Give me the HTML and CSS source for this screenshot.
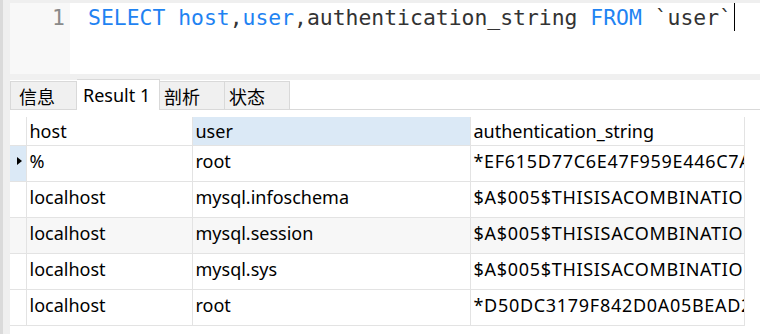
FILE: index.html
```html
<!doctype html>
<html>

<head>
   <meta charset="utf-8">
   <title>query</title>
   <link rel="stylesheet" href="styles.css">
</head>

<body>
   <div class="sideStrip"></div>

   <div class="main">
      <div class="topStrip"></div>

      <div class="editor">
         <div class="gutter">1</div>
         <div class="code"><span class="kw">SELECT</span> <span class="kw">host</span>,<span class="kw">user</span>,authentication_string <span class="kw">FROM</span> `user`<span class="caret"></span></div>
      </div>

      <div class="band"></div>

      <div class="tabs">
         <div class="tab">信息</div>
         <div class="tab active">Result 1</div>
         <div class="tab">剖析</div>
         <div class="tab">状态</div>
      </div>

      <div class="gridWrap">
         <table class="grid">
            <colgroup>
               <col class="cIndicator">
               <col class="cHost">
               <col class="cUser">
               <col class="cAuth">
            </colgroup>
            <thead>
               <tr>
                  <th></th>
                  <th>host</th>
                  <th class="selected">user</th>
                  <th>authentication_string</th>
               </tr>
            </thead>
            <tbody>
               <tr>
                  <td class="indicator current"><span class="arrow"></span></td>
                  <td>%</td>
                  <td>root</td>
                  <td class="hash">*EF615D77C6E47F959E446C7A</td>
               </tr>
               <tr>
                  <td class="indicator"></td>
                  <td>localhost</td>
                  <td>mysql.infoschema</td>
                  <td class="hash">$A$005$THISISACOMBINATION</td>
               </tr>
               <tr class="alt">
                  <td class="indicator"></td>
                  <td>localhost</td>
                  <td>mysql.session</td>
                  <td class="hash">$A$005$THISISACOMBINATION</td>
               </tr>
               <tr>
                  <td class="indicator"></td>
                  <td>localhost</td>
                  <td>mysql.sys</td>
                  <td class="hash">$A$005$THISISACOMBINATION</td>
               </tr>
               <tr>
                  <td class="indicator"></td>
                  <td>localhost</td>
                  <td>root</td>
                  <td class="hash">*D50DC3179F842D0A05BEAD2</td>
               </tr>
            </tbody>
         </table>
      </div>
   </div>
</body>

</html>
```

FILE: styles.css
```css
html,
body {
   margin: 0;
   padding: 0;
   height: 100%;
   background: #FFF;
   overflow: hidden;
}

body {
   display: flex;
   font-family: "Noto Sans", "Noto Sans CJK SC", sans-serif;
   color: #000;
}

.sideStrip {
   width: 7px;
   border-left: 3px solid #DADADA;
   background: #EFEFEF;
   flex: none;
}

.main {
   flex: 1;
   display: flex;
   flex-direction: column;
   min-width: 0;
}

.topStrip {
   height: 3px;
   background: #EFEFEF;
}

/* editor */
.editor {
   height: 71px;
   display: flex;
   font-family: "DejaVu Sans Mono", monospace;
   font-size: 21.4px;
   line-height: 30px;
}

.editor .gutter {
   width: 55px;
   padding-right: 5px;
   background: #F8F8F8;
   color: #8A8A8A;
   text-align: right;
}

.editor .code {
   padding-left: 18px;
   color: #333;
   white-space: pre;
}

.editor .kw {
   color: #1F83F2;
}

.editor .caret {
   display: inline-block;
   width: 0;
   height: 28px;
   border-left: 1.5px solid #000;
   vertical-align: top;
   margin-left: 2px;
}

.band {
   height: 6px;
   background: #F0F0F0;
}

/* tabs */
.tabs {
   height: 30px;
   display: flex;
   align-items: flex-end;
   border-bottom: 1px solid #D9D9D9;
   box-sizing: border-box;
   font-size: 18px;
}

.tab {
   height: 28px;
   box-sizing: border-box;
   padding: 0 8px;
   background: #F0F0F0;
   border: 1px solid #D9D9D9;
   border-bottom: none;
   border-left: none;
   line-height: 28px;
   font-family: "Noto Sans CJK SC", sans-serif;
}

.tab:first-child {
   border-left: 1px solid #D9D9D9;
   width: 67px;
}

.tab.active {
   height: 31px;
   margin-bottom: -1px;
   background: #FFF;
   padding: 0 6px;
   width: 83px;
   line-height: 30px;
   font-family: "Noto Sans", sans-serif;
}

.tab:nth-child(3),
.tab:nth-child(4) {
   width: 65px;
   padding-left: 4px;
}

/* grid */
.gridWrap {
   padding-top: 7px;
   flex: 1;
   overflow: hidden;
}

.grid {
   border-collapse: collapse;
   table-layout: fixed;
   width: 734px;
   font-size: 18px;
}

.grid .cIndicator { width: 16px; }
.grid .cHost { width: 166px; }
.grid .cUser { width: 278px; }
.grid .cAuth { width: 274px; }

.grid th,
.grid td {
   padding: 0 0 0 3px;
   text-align: left;
   font-weight: normal;
   white-space: nowrap;
   overflow: hidden;
   text-overflow: clip;
   border: 1px solid #E3E3E3;
   vertical-align: top;
}

.grid th {
   height: 28px;
   line-height: 28px;
   border-top: none;
}

.grid th:first-child,
.grid td:first-child {
   border-left: none;
   padding: 0;
}

.grid td {
   height: 35px;
   line-height: 30px;
}

.grid td.hash {
   letter-spacing: 0.7px;
}

.grid th.selected {
   background: #DBE9F6;
}

.grid tr.alt td {
   background: #F7F7F7;
}

.grid td.indicator {
   background: #FFF;
}

.grid td.indicator.current {
   background: #DBE9F6;
   position: relative;
}

.arrow {
   position: absolute;
   left: 7px;
   top: 11px;
   width: 0;
   height: 0;
   border-top: 4.5px solid transparent;
   border-bottom: 4.5px solid transparent;
   border-left: 5px solid #000;
}
```
